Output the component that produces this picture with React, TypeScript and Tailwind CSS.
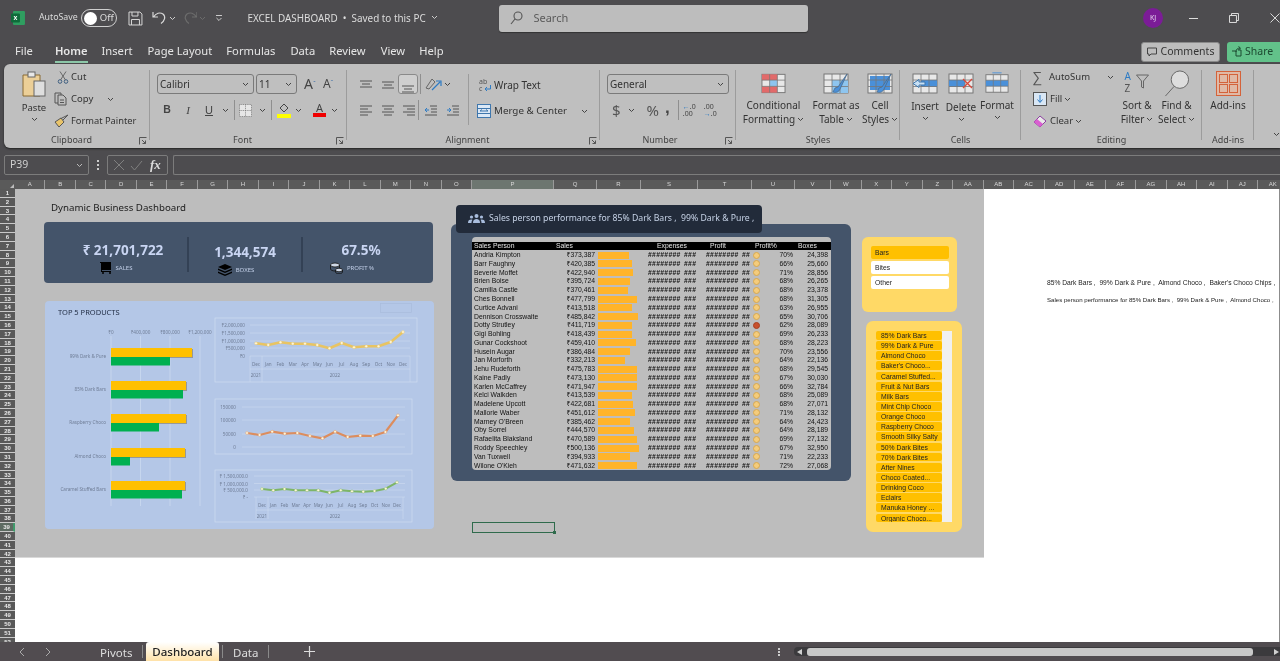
import React from "react";

const FONT = "font-['Noto_Sans','Open_Sans',sans-serif]";
const ARIAL = "font-['Liberation_Sans','Noto_Sans',sans-serif]";

const Chev = ({ className = "", color = "#444" }: { className?: string; color?: string }) => (
  <svg width="7" height="5" viewBox="0 0 7 5" className={"shrink-0 " + className}>
    <path d="M1 1l2.5 2.5L6 1" fill="none" stroke={color} strokeWidth="1" />
  </svg>
);

const Launcher = () => (
  <svg width="8" height="8" viewBox="0 0 8 8" className="absolute right-[3px] bottom-[3px]">
    <path d="M.5 7.5v-7h7M3 3l3.5 3.5M6.5 3.5v3h-3" fill="none" stroke="#555" strokeWidth="1" />
  </svg>
);

const Sep = ({ className = "h-[20px] mx-[2px]" }: { className?: string }) => <div className={"w-px bg-[#8f8f8f] shrink-0 " + className} />;

const Group = ({ w, label, launcher, labelCls = "", children }: { w: string; label: string; launcher?: boolean; labelCls?: string; children: React.ReactNode }) => (
  <div className={"relative shrink-0 flex flex-col h-full " + w}>
    <div className="flex-1 min-h-0 flex">{children}</div>
    <div className={"h-[16px] shrink-0 flex items-center justify-center text-[9px] text-[#444] " + labelCls}>{label}</div>
    {launcher && <Launcher />}
    <div className="absolute right-0 top-[6px] bottom-[8px] w-px bg-[#9c9c9c]" />
  </div>
);

const Lines = ({ rows }: { rows: number[][] }) => (
  <svg width="14" height="13" viewBox="0 0 14 13">
    {rows.map((r, i) => (
      <path key={i} d={`M${r[0]} ${r[2]}H${r[1]}`} stroke="#555" strokeWidth="1" />
    ))}
  </svg>
);

const GridIcon = ({ fill, children, w = 26 }: { fill?: React.ReactNode; children?: React.ReactNode; w?: number }) => (
  <svg width={w} height="22" viewBox="0 0 26 22">
    <rect x="1" y="2" width="24" height="19" fill="#e8e8e8" stroke="#777" />
    {fill}
    <path d="M1 8h24M1 14.500h24M9 2v19M17 2v19" stroke="#777" strokeWidth="0.8" fill="none" />
    {children}
  </svg>
);

const Brush = () => (
  <path d="M24 2L15 15l-3 1-2 4c3 1 6 0 7-3l1-2z" fill="#4a90d9" stroke="#4d6b8a" strokeWidth="0.8" />
);

const BigBtn = ({ w, icon, l1, l2, chevOwnLine, mt = "mt-[4px]" }: { w: string; icon: React.ReactNode; l1: string; l2?: string; chevOwnLine?: boolean; mt?: string }) => (
  <div className={"shrink-0 flex flex-col items-center text-[10px] leading-[14px] text-[#333] pt-[7px] " + w}>
    <div className="h-[23px] flex items-end justify-center">{icon}</div>
    <div className={"whitespace-nowrap " + mt}>{l1}</div>
    {chevOwnLine ? <Chev className="mt-[3px]" /> : (
      <div className="whitespace-nowrap flex items-center gap-[2px]">{l2}<Chev /></div>
    )}
  </div>
);

const Combo = ({ w, text }: { w: string; text: string }) => (
  <div className={"h-[20px] rounded-[3px] border border-[#7a7a7a] flex items-center justify-between pl-[2px] pr-[4px] text-[10px] text-[#333] " + w}>
    <span>{text}</span><Chev />
  </div>
);

const TitleBar = () => (
  <div className="h-[36px] flex items-center text-[#dcdcdc] shrink-0">
    <svg width="14" height="14" viewBox="0 0 14 14" className="ml-[11px]">
      <rect x="2" y="0" width="12" height="14" rx="1" fill="#2f9e60" />
      <rect x="0" y="2.500" width="9" height="9" rx="1" fill="#0f6b3a" />
      <text x="4.500" y="9.500" fontSize="7" fontWeight="700" fill="#fff" textAnchor="middle" fontFamily="Liberation Sans">x</text>
    </svg>
    <span className="ml-[14px] w-[42px] text-[8.800px] whitespace-nowrap">AutoSave</span>
    <div className="w-[36px] h-[18px] rounded-full border border-[#cfcfcf] flex items-center pl-[2px] gap-[3px]">
      <div className="w-[13px] h-[13px] rounded-full bg-white" />
      <span className="text-[9.500px] text-[#ddd]">Off</span>
    </div>
    <svg width="15" height="15" viewBox="0 0 15 15" className="ml-[11px]" fill="none" stroke="#d8d8d8">
      <path d="M1 1h11l2 2v11H1zM4 1v4h6V1M3.500 14V8.500h8V14" />
    </svg>
    <svg width="15" height="14" viewBox="0 0 15 14" className="ml-[9px]" fill="none" stroke="#d8d8d8" strokeWidth="1.200">
      <path d="M1 1v5h5M1.500 6C4 2 8 1 11 3c3 2.500 2 7-2 9.500" />
    </svg>
    <Chev className="ml-[2px]" color="#ccc" />
    <svg width="15" height="14" viewBox="0 0 15 14" className="ml-[7px]" fill="none" stroke="#6c6c6c" strokeWidth="1.200">
      <path d="M14 1v5H9M13.500 6C11 2 7 1 4 3c-3 2.500-2 7 2 9.500" />
    </svg>
    <Chev className="ml-[2px]" color="#6c6c6c" />
    <svg width="8" height="8" viewBox="0 0 8 8" className="ml-[9px]" fill="none" stroke="#ccc">
      <path d="M1 1.500h6M1.500 4l2.500 2.500L6.500 4" />
    </svg>
    <span className="ml-[24px] text-[9.900px] whitespace-pre flex items-center gap-[3px] w-[253px]">EXCEL DASHBOARD  •  Saved to this PC <Chev color="#ccc" /></span>
    <div className="w-[310px] h-[27px] rounded-[3px] bg-[#bdbdbd] flex items-center pl-[11px] gap-[10px] text-[#5b5b5b] text-[11px] shadow-[0_1px_1px_#333]">
      <svg width="13" height="14" viewBox="0 0 13 14" fill="none" stroke="#555" strokeWidth="1.100"><circle cx="8" cy="5" r="4" /><path d="M5 8l-4 5" /></svg>
      Search
    </div>
    <div className="ml-[335px] w-[20px] h-[20px] rounded-full bg-[#7b1c97] flex items-center justify-center text-[7px] text-[#e6d3ee]">KJ</div>
    <div className="ml-[26px] w-[9px] h-px bg-[#ddd]" />
    <svg width="10" height="10" viewBox="0 0 10 10" className="ml-[31px]" fill="none" stroke="#ddd"><path d="M.5 2.500h7v7h-7zM2.500 2.500v-2h7v7h-2" /></svg>
    <svg width="10" height="10" viewBox="0 0 10 10" className="ml-[31px]" stroke="#ddd"><path d="M.5.5l9 9M9.500.5l-9 9" /></svg>
  </div>
);

const menu: [string, string][] = [["File", "ml-[15px]"], ["Home", "ml-[22px]"], ["Insert", "ml-[14px]"], ["Page Layout", "ml-[15px]"], ["Formulas", "ml-[14px]"], ["Data", "ml-[15px]"], ["Review", "ml-[14px]"], ["View", "ml-[15px]"], ["Help", "ml-[14px]"]];

const MenuBar = () => (
  <div className="h-[28px] flex items-center text-[11.200px] text-[#e6e6e6] shrink-0">
    <div className="flex items-center pt-[3px]">
      {menu.map(([m, c]) => (
        <span key={m} className={"relative whitespace-nowrap " + c + (m === "Home" ? " font-semibold" : "")}>
          {m}
          {m === "Home" && <span className="absolute left-0 right-0 -bottom-[3px] h-[2px] bg-[#8cc7a8]" />}
        </span>
      ))}
    </div>
    <div className="ml-auto w-[79px] h-[20px] mt-[3px] rounded-[3px] bg-[#bdbdbd] border border-[#8a8a8a] flex items-center justify-center gap-[4px] text-[10.500px] text-[#333]">
      <svg width="10" height="10" viewBox="0 0 10 10" fill="none" stroke="#444"><path d="M.5 1h9v6H4L2 9V7H.5z" /></svg>Comments
    </div>
    <div className="ml-[7px] w-[53px] h-[20px] mt-[3px] rounded-l-[3px] bg-[#62c28a] flex items-center pl-[4px] gap-[3px] text-[10.500px] text-[#1d4a31] shrink-0">
      <svg width="11" height="11" viewBox="0 0 11 11" fill="none" stroke="#1d4a31"><path d="M1 5h4v5h5V4H7M5 6c0-3 2-4 4-4M7.500.5L9.500 2 7.500 4" /></svg>Share
    </div>
  </div>
);

const Ribbon = () => (
  <div className="h-[84px] ml-[4px] rounded-l-[6px] bg-[#bfbfbf] flex shrink-0 shadow-[0_1px_2px_#222]">
    <Group w="w-[146px]" label="Clipboard" labelCls="pr-[11px]" launcher>
      <div className="w-[50px] pl-[12px] pr-[2px] pt-[7px] flex flex-col items-center text-[9.500px] text-[#333] leading-[13px]">
        <svg width="24" height="27" viewBox="0 0 24 27" fill="none" className="shrink-0">
          <path d="M1 4h17v21H1z" fill="#eccf97" stroke="#8a6a33" />
          <rect x="6" y="1" width="7" height="5" fill="#e8e8e8" stroke="#666" />
          <rect x="12" y="10" width="11" height="15" fill="#dedede" stroke="#666" />
        </svg>
        <span className="mt-[3px]">Paste</span>
        <Chev className="mt-[3px]" />
      </div>
      <div className="flex flex-col pt-[2px] text-[9.500px] text-[#333]">
        <div className="h-[22px] shrink-0 flex items-center">
          <svg width="14" height="13" viewBox="0 0 14 13" fill="none" stroke="#3f5f80" className="ml-[2px]"><circle cx="4" cy="10.500" r="1.800" /><circle cx="10" cy="10.500" r="1.800" /><path d="M4.500 9L10 .5M9.500 9L4 .5" stroke="#666" /></svg>
          <span className="ml-[1px]">Cut</span>
        </div>
        <div className="h-[22px] shrink-0 flex items-center">
          <svg width="14" height="14" viewBox="0 0 14 14" fill="none" stroke="#555"><path d="M4 11H1V1h6v2M4 3h5l3 3v7H4z" /><path d="M6 8h4M6 10.500h4" /></svg>
          <span className="ml-[3px]">Copy</span>
          <Chev className="ml-[14px]" />
        </div>
        <div className="h-[22px] shrink-0 flex items-center">
          <svg width="15" height="14" viewBox="0 0 15 14" fill="none"><path d="M14 1L8 7 6 5z" stroke="#555" /><path d="M7 4L1 8l4 5 5-5z" fill="#e9c46a" stroke="#555" /></svg>
          <span className="ml-[2px] whitespace-nowrap text-[9.300px]">Format Painter</span>
        </div>
      </div>
    </Group>
    <Group w="w-[197px]" label="Font" labelCls="pr-[12px]" launcher>
      <div className="pl-[7px] pt-[10px] flex flex-col gap-[6px] w-full">
        <div className="flex items-center">
          <Combo w="w-[97px]" text="Calibri" />
          <Combo w="w-[41px] ml-[2px]" text="11" />
          <span className="ml-[7px] text-[14px] text-[#444] leading-none">A<sup className="text-[7px] text-[#3d6ea5]">ˆ</sup></span>
          <span className="ml-[7px] text-[12px] text-[#444] leading-none">A<sup className="text-[7px] text-[#3d6ea5]">ˇ</sup></span>
        </div>
        <div className="flex items-center h-[20px] text-[#444]">
          <span className={"w-[20px] text-center font-bold text-[10.500px] " + ARIAL}>B</span>
          <span className="w-[22px] text-center italic text-[11px] font-['Liberation_Serif']">I</span>
          <span className={"w-[20px] text-center underline text-[11px] " + ARIAL}>U</span>
          <Chev className="ml-[3px]" />
          <Sep className="h-[20px] ml-[5px]" />
          <svg width="13" height="13" viewBox="0 0 13 13" className="ml-[4px]" fill="#e6e6e6" stroke="#777" strokeWidth="0.8" strokeDasharray="1 .8"><rect x=".5" y=".5" width="12" height="12" /><path d="M.5 6.500h12M6.500.5v12" /></svg>
          <Chev className="ml-[7px]" />
          <Sep className="h-[20px] ml-[5px]" />
          <svg width="14" height="15" viewBox="0 0 14 15" className="ml-[5px]"><path d="M7 1l4 4-4 4-4-4z" fill="none" stroke="#444" /><rect y="11" width="14" height="4" fill="#ffff00" /></svg>
          <Chev className="ml-[4px]" />
          <div className="ml-[11px] flex flex-col items-center leading-none">
            <span className="text-[11px] text-[#444] h-[11px] -mt-[2px]">A</span>
            <span className="block w-[13px] h-[4px] bg-[#f00000]" />
          </div>
          <Chev className="ml-[5px]" />
        </div>
      </div>
    </Group>
    <Group w="w-[253px]" label="Alignment" labelCls="pr-[12px]" launcher>
      <div className="pl-[12px] pt-[10px] flex flex-col gap-[6px] w-[121px] shrink-0">
        <div className="flex items-center h-[20px]">
          <Lines rows={[[1, 13, 3], [3, 11, 6], [1, 13, 9]]} />
          <span className="w-[8px]" />
          <Lines rows={[[1, 13, 4], [3, 11, 7], [1, 13, 10]]} />
          <div className="ml-[3px] w-[20px] h-[20px] rounded-[3px] border border-[#8a8a8a] bg-[#cfcfcf] flex items-end justify-center"><Lines rows={[[1, 13, 6], [3, 11, 9], [1, 13, 12]]} /></div>
          <Sep className="h-[20px] ml-[2px]" />
          <svg width="17" height="15" viewBox="0 0 17 15" className="ml-[4px]" fill="none"><path d="M1 11L7 2l3 3-6 7z" stroke="#666" /><path d="M7 13L15 5M11 4h5v5" stroke="#2d7bc4" strokeWidth="1.200" /></svg>
          <Chev className="ml-[2px]" />
        </div>
        <div className="flex items-center h-[20px]">
          <Lines rows={[[1, 13, 2], [1, 9, 5], [1, 13, 8], [1, 9, 11]]} />
          <span className="w-[8px]" />
          <Lines rows={[[1, 13, 2], [3, 11, 5], [1, 13, 8], [3, 11, 11]]} />
          <span className="w-[7px]" />
          <Lines rows={[[1, 13, 2], [5, 13, 5], [1, 13, 8], [5, 13, 11]]} />
          <Sep className="h-[20px] ml-[2px]" />
          <svg width="13" height="13" viewBox="0 0 13 13" className="ml-[5px]" fill="none" stroke="#555"><path d="M6 2h7M7 5h6M7 8h6M1 11h12" /><path d="M5 6H1M3 4L1 6l2 2" stroke="#2d7bc4" /></svg>
          <svg width="13" height="13" viewBox="0 0 13 13" className="ml-[9px]" fill="none" stroke="#555"><path d="M6 2h7M7 5h6M7 8h6M1 11h12" /><path d="M1 6h4M3 4l2 2-2 2" stroke="#2d7bc4" /></svg>
        </div>
      </div>
      <div className="w-px h-[51px] mt-[10px] bg-[#9c9c9c]" />
      <div className="pl-[10px] pt-[11px] flex flex-col gap-[6px] text-[10px] text-[#333]">
        <div className="h-[20px] flex items-center">
          <svg width="13" height="15" viewBox="0 0 13 15" fill="none" className="shrink-0">
            <text x="0" y="6" fontSize="7" fill="#555" fontFamily="Noto Sans">ab</text>
            <text x="0" y="13" fontSize="7" fill="#555" fontFamily="Noto Sans">c</text>
            <path d="M11.500 7v4H6M8 9l-2 2 2 2" stroke="#2d7bc4" />
          </svg>
          <span className="ml-[2px]">Wrap Text</span>
        </div>
        <div className="h-[20px] flex items-center">
          <svg width="14" height="14" viewBox="0 0 14 14" className="-ml-[2px]" fill="#dbe8f6" stroke="#3f77ad"><rect x=".5" y=".5" width="13" height="13" /><path d="M.5 4.500h13M.5 9.500h13M3 7h8M3 7l2-1.500M11 7L9 5.500" /></svg>
          <span className="ml-[3px] whitespace-nowrap text-[9.800px]">Merge &amp; Center</span>
          <Chev className="ml-[14px]" />
        </div>
      </div>
    </Group>
    <Group w="w-[136px]" label="Number" labelCls="pr-[16px]" launcher>
      <div className="pl-[7px] pt-[10px] flex flex-col gap-[6px]">
        <Combo w="w-[122px]" text="General" />
        <div className="h-[20px] flex items-center text-[#444]">
          <span className="ml-[5px] text-[15px] text-[#555]">$</span>
          <Chev className="ml-[7px]" />
          <span className="ml-[12px] text-[15px] text-[#555]">%</span>
          <span className={"ml-[6px] text-[17px] font-bold leading-none -mt-[6px] " + ARIAL}>,</span>
          <Sep className="h-[20px] ml-[8px]" />
          <span className="ml-[4px] text-[7px] leading-[7px] text-[#444] w-[15px] shrink-0"><span className="text-[#2d7bc4]">←</span>.0<br />.00</span>
          <span className="ml-[6px] text-[7px] leading-[7px] text-[#444] w-[15px] shrink-0">.00<br /><span className="text-[#2d7bc4]">→</span>.0</span>
        </div>
      </div>
    </Group>
    <Group w="w-[164px]" label="Styles">
      <BigBtn w="w-[75px]" l1="Conditional" l2="Formatting" icon={
        <GridIcon w={25} fill={<><rect x="1" y="2" width="16" height="6" fill="#e26a6a" /><rect x="9" y="8" width="8" height="6.500" fill="#8ec5ef" /><rect x="1" y="14.500" width="16" height="6.500" fill="#e26a6a" /></>} />
      } />
      <BigBtn w="w-[50px]" l1="Format as" l2="Table" icon={
        <GridIcon fill={<rect x="9" y="8" width="16" height="13" fill="#8ec5ef" />}><Brush /></GridIcon>
      } />
      <BigBtn w="w-[38px]" l1="Cell" l2="Styles" icon={
        <GridIcon fill={<rect x="3" y="4" width="20" height="14" fill="#4a90d9" />}><Brush /></GridIcon>
      } />
    </Group>
    <Group w="w-[121px]" label="Cells">
      <div className="w-[7px]" />
      <BigBtn w="w-[36px]" chevOwnLine l1="Insert" mt="mt-[5px]" icon={
        <GridIcon fill={<rect x="9" y="8" width="16" height="7" fill="#4a90d9" />}><path d="M1 11.500l6-4v2.500h6v3H7v2.500z" fill="#c9e1f5" stroke="#3f77ad" /></GridIcon>
      } />
      <BigBtn w="w-[36px]" chevOwnLine l1="Delete" mt="mt-[6px]" icon={
        <GridIcon fill={<rect x="1" y="8" width="16" height="7" fill="#4a90d9" />}><path d="M15 7l9 9M24 7l-9 9" stroke="#d9483b" strokeWidth="1.300" /></GridIcon>
      } />
      <BigBtn w="w-[36px]" chevOwnLine l1="Format" mt="mt-[4px]" icon={
        <GridIcon w={24} fill={<><path d="M8 0h10" stroke="#4a90d9" /><rect x="1" y="8" width="24" height="6.500" fill="#4a90d9" /></>} />
      } />
    </Group>
    <Group w="w-[181px]" label="Editing">
      <div className="pl-[12px] pt-[2px] flex flex-col text-[9.500px] text-[#333] w-[96px] shrink-0">
        <div className="h-[22px] shrink-0 flex items-center">
          <span className="w-[14px] text-[14px] text-[#555] leading-none">∑</span>
          <span className="ml-[2px] whitespace-nowrap">AutoSum</span>
          <Chev className="ml-[17px]" />
        </div>
        <div className="h-[22px] shrink-0 flex items-center">
          <svg width="14" height="14" viewBox="0 0 14 14" fill="#d9e7f5" stroke="#555"><rect x=".5" y=".5" width="13" height="13" /><path d="M7 3v7M4.500 7.500L7 10.500l2.500-3" stroke="#2d7bc4" fill="none" /></svg>
          <span className="ml-[3px]">Fill</span><Chev className="ml-[2px]" />
        </div>
        <div className="h-[22px] shrink-0 flex items-center">
          <svg width="14" height="13" viewBox="0 0 14 13"><path d="M1 7l6-6 6 5-6 6z" fill="#e9e9e9" stroke="#8c3fa0" /><path d="M1 7l3-3 6 5-3 3z" fill="#d95fd0" /></svg>
          <span className="ml-[3px]">Clear</span><Chev className="ml-[2px]" />
        </div>
      </div>
      <div className="flex text-[10px] leading-[14px] text-[#333] pt-[6px]">
        <div className="w-[40px] flex flex-col items-center">
          <div className="h-[28px] flex items-start">
            <div className="w-[10px] flex flex-col text-[10px] leading-[12px]">
              <span className="text-[#2d7bc4]">A</span>
              <span className="text-[#555]">Z</span>
            </div>
            <svg width="15" height="20" viewBox="0 0 14 20" fill="none" stroke="#666"><path d="M1 5h12L8 11v7l-2-1v-6z" /></svg>
          </div>
          <span>Sort &amp;</span>
          <span className="flex items-center gap-[2px]">Filter<Chev /></span>
        </div>
        <div className="w-[39px] flex flex-col items-center">
          <svg width="27" height="28" viewBox="0 0 27 29" fill="none" stroke="#666" className="shrink-0"><circle cx="17" cy="10" r="9" fill="#ddd" /><path d="M11 17L2 27" /></svg>
          <span>Find &amp;</span>
          <span className="flex items-center gap-[2px]">Select<Chev /></span>
        </div>
      </div>
    </Group>
    <Group w="w-[52px]" label="Add-ins">
      <div className="w-full flex flex-col items-center pt-[7px] text-[10px] text-[#333]">
        <svg width="25" height="25" viewBox="0 0 25 25" fill="#e0b9a6" stroke="#d4623a" className="shrink-0"><rect x=".5" y=".5" width="24" height="24" /><rect x="3.500" y="3.500" width="8" height="8" fill="none" /><rect x="13.500" y="3.500" width="8" height="8" fill="none" /><rect x="3.500" y="13.500" width="8" height="8" fill="none" /><rect x="13.500" y="13.500" width="8" height="8" fill="none" /></svg>
        <span className="mt-[2px] whitespace-nowrap">Add-ins</span>
      </div>
    </Group>
    <div className="flex-1 flex items-end justify-end pb-[11px]"><Chev /></div>
  </div>
);

const FormulaBar = () => (
  <div className="h-[20px] mt-[7px] flex items-stretch shrink-0 text-[#cfcfcf]">
    <div className="ml-[4px] w-[85px] border border-[#7c7c7c] rounded-[2px] flex items-center justify-between pl-[5px] pr-[5px] text-[10.500px]">P39<Chev color="#bbb" /></div>
    <div className="w-[18px] flex flex-col items-center justify-center gap-[2px]"><span className="w-[2px] h-[2px] bg-[#ccc]" /><span className="w-[2px] h-[2px] bg-[#ccc]" /><span className="w-[2px] h-[2px] bg-[#ccc]" /></div>
    <div className="w-[61px] border border-[#7c7c7c] rounded-[2px] flex items-center">
      <svg width="12" height="12" viewBox="0 0 12 12" className="ml-[5px]" stroke="#808080"><path d="M1 1l10 10M11 1L1 11" /></svg>
      <svg width="13" height="11" viewBox="0 0 13 11" className="ml-[5px]" fill="none" stroke="#808080"><path d="M1 6l3.500 4L12 1" /></svg>
      <span className="ml-[7px] text-[13px] italic font-bold font-['Liberation_Serif'] text-[#ddd]">fx</span>
    </div>
    <div className="ml-[5px] flex-1 border border-r-0 border-[#7c7c7c] rounded-l-[2px]" />
  </div>
);

const cols = ["A","B","C","D","E","F","G","H","I","J","K","L","M","N","O","P","Q","R","S","T","U","V","W","X","Y","Z","AA","AB","AC","AD","AE","AF","AG","AH","AI","AJ","AK"];

const ColHeader = () => (
  <div className={"h-[9px] mt-[5px] flex bg-[#5a5a5a] shrink-0 overflow-hidden text-[6px] leading-[9px] text-[#d8d8d8] " + ARIAL}>
    <div className="w-[15px] shrink-0 relative"><span className="absolute right-[1px] bottom-[1px] w-0 h-0 border-l-[4px] border-l-transparent border-b-[4px] border-b-[#bbb]" /></div>
    <div className="grid grid-cols-[repeat(15,30.47px)_82px_43px_44px_57px_54px_43px_36px_repeat(15,30.5px)] flex-1">
      {cols.map(c => (
        <div key={c} className={"text-center border-r border-[#9a9a9a] " + (c === "P" ? "bg-[#6d7670] border-b border-b-[#5fae85]" : "")}>{c}</div>
      ))}
    </div>
  </div>
);

const RowHeader = () => (
  <div className={"w-[15px] shrink-0 bg-[#bdbdbd] overflow-hidden flex flex-col text-[6px] font-bold leading-[8px] text-[#e8e8e8] " + ARIAL}>
    {Array.from({ length: 52 }, (_, i) => (
      <div key={i} className={"h-[8.8px] shrink-0 text-center border-b border-[#c9c9c9] " + (i === 38 ? "bg-[#5d6b62] border-r-2 border-r-[#3f9a6b]" : "bg-[#595959]")}>{i + 1}</div>
    ))}
  </div>
);

const months = ["Dec", "Jan", "Feb", "Mar", "Apr", "May", "Jun", "Jul", "Aug", "Sep", "Oct", "Nov", "Dec"];

const Line = ({ xs, xe, ys, color, sw = 2 }: { xs: number; xe: number; ys: number[]; color: string; sw?: number }) => {
  const pts = ys.map((y, i) => [xs + ((xe - xs) * i) / 12, y]);
  return (
    <g>
      <polyline points={pts.map(p => p.join(",")).join(" ")} fill="none" stroke={color} strokeWidth={sw} strokeLinejoin="round" />
      {pts.map((p, i) => <circle key={i} cx={p[0]} cy={p[1]} r="1.400" fill="#fff6d8" stroke={color} strokeWidth="0.400" />)}
    </g>
  );
};

const barRows = [
  { n: "99% Dark & Pure", y: 348, a: 192, b: 170 },
  { n: "85% Dark Bars", y: 381, a: 186, b: 183 },
  { n: "Raspberry Choco", y: 414, a: 186, b: 159 },
  { n: "Almond Choco", y: 448, a: 185, b: 130 },
  { n: "Caramel Stuffed Bars", y: 481, a: 185, b: 182 },
];

const T = ({ x, y, a = "middle", c, s = 4.600 }: { x: number; y: number; a?: "middle" | "end" | "start"; c: string; s?: number }) => (
  <text x={x} y={y} fontSize={s} textAnchor={a} fill="#6f7d96" fontFamily="Noto Sans">{c}</text>
);

const Charts = () => (
  <svg width="389" height="228" viewBox="45 301 389 228" className="absolute inset-0">
    <rect x="380.500" y="303.500" width="31" height="9" fill="none" stroke="#a9bcdc" strokeWidth="0.700" />
    {[111, 140.500, 170, 200].map(x => <path key={x} d={`M${x} 336V506`} stroke="#cfdcf0" strokeWidth="0.700" />)}
    <T x={111} y={334} c="₹0" />
    <T x={140.500} y={334} c="₹400,000" />
    <T x={170} y={334} c="₹800,000" />
    <T x={200} y={334} c="₹1,200,000" />
    {barRows.map(r => (
      <g key={r.n}>
        <rect x="111.500" y={r.y + 1} width={r.a - 110.500} height="9" fill="#8f8c86" opacity="0.800" />
        <rect x="111" y={r.y} width={r.a - 111} height="9" fill="#ffc000" />
        <rect x="111" y={r.y + 9} width={r.b - 111} height="8.500" fill="#00b050" />
        <T x={106} y={r.y + 9.500} a="end" c={r.n} />
      </g>
    ))}

    <rect x="215" y="318" width="202" height="64" fill="none" stroke="#cfdcf0" strokeWidth="0.700" />
    {[325, 333, 341, 348, 356].map(y => <path key={y} d={`M250 ${y}H410`} stroke="#cfdcf0" strokeWidth="0.600" />)}
    {["₹2,000,000", "₹1,500,000", "₹1,000,000", "₹500,000", "₹0"].map((l, i) => <T key={l} x={245} y={[327, 335, 343, 350, 358][i]} a="end" c={l} />)}
    <Line xs={256} xe={403} ys={[343.300, 345, 342.300, 343.700, 343.700, 345, 348.300, 343, 347.300, 346.300, 346.300, 342, 332]} color="#e8c463" sw={2.600} />
    <path d="M250 356V382M262 356V382M410 356V382M250 369H410" stroke="#cfdcf0" strokeWidth="0.600" fill="none" />
    {months.map((m, i) => <T key={i} x={256 + 12.250 * i} y={366} c={m} />)}
    <T x={256} y={377} c="2021" />
    <T x={335} y={377} c="2022" />

    <rect x="215" y="399" width="197" height="55" fill="none" stroke="#cfdcf0" strokeWidth="0.700" />
    {[407, 420, 434, 447].map(y => <path key={y} d={`M242 ${y}H405`} stroke="#cfdcf0" strokeWidth="0.600" />)}
    {["150000", "100000", "50000", "0"].map((l, i) => <T key={l} x={236} y={[409, 422, 436, 449][i]} a="end" c={l} />)}
    <Line xs={247} xe={398} ys={[433, 435, 431.700, 433.700, 433, 436, 438.300, 431.700, 437, 435.700, 436, 432, 415.300]} color="#dc8d5e" sw={2.200} />

    <rect x="215" y="470" width="197" height="52" fill="none" stroke="#cfdcf0" strokeWidth="0.700" />
    {[476, 483.500, 490, 497].map(y => <path key={y} d={`M254 ${y}H405`} stroke="#cfdcf0" strokeWidth="0.600" />)}
    {["₹ 1,500,000.0", "₹ 1,000,000.0", "₹ 500,000.0", "₹ -"].map((l, i) => <T key={l} x={248} y={[478, 485.500, 492, 499][i]} a="end" c={l} />)}
    <Line xs={262} xe={397} ys={[489, 490.300, 489, 490.300, 490.300, 490.300, 492.700, 490.300, 491.300, 491.700, 491, 488.700, 482.300]} color="#7db567" sw={2} />
    <path d="M256 497V519M268 497V519M403 497V519M256 510H403" stroke="#cfdcf0" strokeWidth="0.600" fill="none" />
    {months.map((m, i) => <T key={i} x={262 + 11.250 * i} y={507} c={m} />)}
    <T x={262} y={518} c="2021" />
    <T x={335} y={518} c="2022" />
  </svg>
);

const Kpi = ({ cls, value, label, vcls, lcls, icon }: { cls: string; value: string; label: string; vcls: string; lcls: string; icon: React.ReactNode }) => (
  <div className={"flex flex-col items-center pt-[20px] " + cls}>
    <div className={"font-bold text-[#c9d5f2] leading-[16px] whitespace-nowrap text-[13.500px] " + vcls}>{value}</div>
    <div className={"mt-[4px] flex items-center gap-[4px] text-[6px] text-[#c2cfe8] h-[12px] " + lcls}>{icon}{label}</div>
  </div>
);

const KpiCard = () => (
  <div className={"absolute left-[29px] top-[33px] w-[389px] h-[61px] rounded-[4px] bg-[#44546a] flex " + FONT}>
    <Kpi cls="w-[144px] pl-[14px]" value="₹ 21,701,722" vcls="" lcls="-ml-[14px]" label="SALES" icon={
      <svg width="12" height="12" viewBox="0 0 12 12"><path d="M0 0h11v8H2v1h9v1H1V1H0z" /><circle cx="3" cy="11" r="1" /><circle cx="10" cy="11" r="1" /></svg>
    } />
    <div className="w-[2px] h-[35px] mt-[15px] bg-[#334155] -ml-[1px]" />
    <Kpi cls="w-[112px]" value="1,344,574" vcls="mt-[2px]" lcls="-ml-[18px] -mt-[1px]" label="BOXES" icon={
      <svg width="14" height="12" viewBox="0 0 14 12"><path d="M7 0l7 3-7 3-7-3z" /><path d="M0 4.500l7 3 7-3v1.500l-7 3-7-3zM0 7.500l7 3 7-3V9l-7 3-7-3z" /></svg>
    } />
    <div className="w-[2px] h-[35px] mt-[15px] bg-[#334155]" />
    <Kpi cls="w-[130px] pr-[14px]" value="67.5%" vcls="" lcls="-ml-[18px] -mt-[2px]" label="PROFIT %" icon={
      <svg width="13" height="12" viewBox="0 0 13 12" fill="#cfd8e6" stroke="#111" strokeWidth="0.800"><ellipse cx="5" cy="3" rx="4.500" ry="2" /><path d="M.5 3v4c0 1 2 2 4.500 2M9.500 3v3" fill="none" /><ellipse cx="9" cy="8" rx="3.500" ry="1.800" /><path d="M5.500 8v2c0 1 1.500 1.800 3.500 1.800s3.500-.8 3.500-1.800V8" fill="none" /></svg>
    } />
  </div>
);

const people: [string, number, string, string, boolean?][] = [
  ["Andria Kimpton", 373387, "70%", "24,398"], ["Barr Faughny", 420385, "66%", "25,660"], ["Beverie Moffet", 422940, "71%", "28,856"],
  ["Brien Boise", 395724, "68%", "26,265"], ["Camilla Castle", 370461, "68%", "23,378"], ["Ches Bonnell", 477799, "68%", "31,305"],
  ["Curtice Advani", 413518, "63%", "26,955"], ["Dennison Crosswaite", 485842, "65%", "30,706"], ["Dotty Strutley", 411719, "62%", "28,089", true],
  ["Gigi Bohling", 418439, "69%", "26,233"], ["Gunar Cockshoot", 459410, "68%", "28,223"], ["Husein Augar", 386484, "70%", "23,556"],
  ["Jan Morforth", 332213, "64%", "22,136"], ["Jehu Rudeforth", 475783, "68%", "29,545"], ["Kaine Padly", 473130, "67%", "30,030"],
  ["Karlen McCaffrey", 471947, "66%", "32,784"], ["Kelci Walkden", 413539, "68%", "25,089"], ["Madelene Upcott", 422681, "68%", "27,071"],
  ["Mallorie Waber", 451612, "71%", "28,132"], ["Marney O'Breen", 385462, "64%", "24,423"], ["Oby Sorrel", 444570, "64%", "28,189"],
  ["Rafaelita Blaksland", 470589, "69%", "27,132"], ["Roddy Speechley", 500136, "67%", "32,950"], ["Van Tuxwell", 394933, "71%", "22,233"],
  ["Wilone O'Kieh", 471632, "72%", "27,068"],
];

const GRID = "grid grid-cols-[82px_39px_53px_36px_22px_36px_11px_8px_32px_35px]";
const HASH = "font-bold text-[6.800px] tracking-[0.3px]";

const SalesTable = () => (
  <>
    <div className="absolute left-[436px] top-[35px] w-[400px] h-[257px] rounded-[6px] bg-[#44546a]">
      <div className={"absolute left-[21px] top-[13px] w-[359px] h-[233px] rounded-[4px] bg-[#bdbdbd] pt-[5px] overflow-hidden text-[6.800px] text-[#111] " + ARIAL}>
        <div className={GRID + " h-[8px] mb-[0.800px] bg-black text-[#e6e6e6] leading-[8px] pl-[2px]"}>
          <span>Sales Person</span><span>Sales</span><span />
          <span className="col-span-2 pl-[9px]">Expenses</span>
          <span className="col-span-2 pl-[4px]">Profit</span>
          <span className="col-span-2 pl-[2px]">Profit%</span>
          <span className="pl-[5px]">Boxes</span>
        </div>
        {people.map(([n, s, p, b, red]) => (
          <div key={n} className={GRID + " h-[8.780px] items-center leading-[8px] pl-[2px]"}>
            <span className="whitespace-nowrap">{n}</span>
            <span className="text-right">₹{s.toLocaleString("en-US")}</span>
            <span className="pl-[3px]"><span className="block h-[7px] bg-[#ffb429]" style={{ width: (s / 500136) * 41 }} /></span>
            <span className={HASH}>########</span>
            <span className={HASH}>###</span>
            <span className={HASH}>########</span>
            <span className={HASH}>##</span>
            <span className={"w-[7px] h-[7px] rounded-full " + (red ? "bg-[#c8502d] border border-[#a84020]" : "bg-[#f4cc7c] border border-[#d8a84f]")} />
            <span className="text-right">{p}</span>
            <span className="text-right">{b}</span>
          </div>
        ))}
      </div>
    </div>
    <div className={"absolute left-[441px] top-[16px] w-[306px] h-[28px] rounded-[4px] bg-[#222b3a] flex items-center pl-[12px] gap-[4px] text-[8.700px] text-[#c6d2e6] whitespace-pre " + FONT}>
      <svg width="17" height="10" viewBox="0 0 17 10" fill="#a9bddd"><circle cx="8.500" cy="2" r="2" /><path d="M5 9c0-3 1.500-4 3.500-4S12 6 12 9z" /><circle cx="3.500" cy="3" r="1.600" /><path d="M0 9c0-2.500 1-3.500 3.500-3.500 1 0 1 .5.500 1-.5 1-.5 2-.5 2.500z" /><circle cx="13.500" cy="3" r="1.600" /><path d="M17 9c0-2.500-1-3.500-3.500-3.500-1 0-1 .5-.5 1 .5 1 .5 2 .5 2.500z" /></svg>
      Sales person performance for 85% Dark Bars ,  99% Dark &amp; Pure ,
    </div>
  </>
);

const cats = ["Bars", "Bites", "Other"];
const prods = ["85% Dark Bars", "99% Dark & Pure", "Almond Choco", "Baker's Choco...", "Caramel Stuffed...", "Fruit & Nut Bars", "Milk Bars", "Mint Chip Choco", "Orange Choco", "Raspberry Choco", "Smooth Silky Salty", "50% Dark Bites", "70% Dark Bites", "After Nines", "Choco Coated...", "Drinking Coco", "Eclairs", "Manuka Honey ...", "Organic Choco..."];

const Slicers = () => (
  <div className={"text-[6.800px] text-[#222] " + ARIAL}>
    <div className="absolute left-[847px] top-[48px] w-[95px] h-[75px] rounded-[6px] bg-[#ffd966] pt-[9px] pl-[9px] flex flex-col gap-[2px]">
      {cats.map((c, i) => (
        <div key={c} className={"w-[78px] h-[13px] rounded-[2px] pl-[4px] leading-[13px] " + (i === 0 ? "bg-[#ffc000]" : "bg-white")}>{c}</div>
      ))}
    </div>
    <div className="absolute left-[851px] top-[132px] w-[96px] h-[211px] rounded-[7px] bg-[#ffd966] pt-[10px] pl-[10px] flex">
      <div className="w-[66px] flex flex-col">
        {prods.map(p => (
          <div key={p} className="h-[8.800px] mb-[1.350px] shrink-0 rounded-[2px] bg-[#ffc000] pl-[5px] leading-[9px] whitespace-nowrap overflow-hidden">{p}</div>
        ))}
      </div>
      <div className="w-[10px] h-[191px] bg-[#f0f0f0]" />
    </div>
  </div>
);

const Sheet = () => (
  <div className="relative flex-1 bg-white overflow-hidden">
    <div className="w-[969px] h-[369px] bg-[#bdbdbd] border-b border-[#d9d9d9]" />
    <div className={"absolute left-[36px] top-[12px] text-[9.700px] leading-[14px] text-[#1c1c1c] " + FONT}>Dynamic Business Dashboard</div>
    <KpiCard />
    <div className={"absolute left-[30px] top-[112px] w-[389px] h-[228px] rounded-[4px] bg-[#b4c7e7] " + FONT}>
      <Charts />
      <div className="absolute left-[13px] top-[6px] text-[7.500px] text-[#1f2b42]">TOP 5 PRODUCTS</div>
    </div>
    <SalesTable />
    <Slicers />
    <div className="absolute left-[457px] top-[333px] w-[83px] h-[11px] border-[1.500px] border-[#2f6b4c]">
      <span className="absolute -right-[2px] -bottom-[2px] w-[3px] h-[3px] bg-[#2f6b4c]" />
    </div>
    <div className={"absolute left-[1032px] top-[89px] w-[231px] overflow-hidden whitespace-pre text-[6.700px] text-[#222] " + ARIAL}>85% Dark Bars ,  99% Dark &amp; Pure ,  Almond Choco ,  Baker's Choco Chips ,</div>
    <div className={"absolute left-[1032px] top-[106px] w-[231px] overflow-hidden whitespace-pre text-[6.100px] text-[#222] " + ARIAL}>Sales person performance for 85% Dark Bars ,  99% Dark &amp; Pure ,  Almond Choco ,</div>
    <div className="absolute right-0 top-0 bottom-0 w-px bg-[#8c8c8c]" />
  </div>
);

const SheetTabs = () => (
  <div className={"h-[19px] bg-[#514c50] flex items-center shrink-0 text-[11.500px] text-[#dedede] " + FONT}>
    <svg width="7" height="10" viewBox="0 0 7 10" className="ml-[18px]" fill="none" stroke="#aaa"><path d="M6 1L2 5l4 4" /></svg>
    <svg width="7" height="10" viewBox="0 0 7 10" className="ml-[20px]" fill="none" stroke="#aaa"><path d="M1 1l4 4-4 4" /></svg>
    <span className="ml-[48px] w-[42px] pt-[3px] leading-none">Pivots</span>
    <div className="w-px h-[13px] bg-[#8a8a8a]" />
    <div className="ml-[3px] w-[73px] h-full rounded-t-[3px] bg-gradient-to-b from-[#ffffff] to-[#ffe2a8] text-[#222] font-medium flex items-center justify-center">Dashboard</div>
    <div className="ml-[3px] w-px h-[13px] bg-[#8a8a8a]" />
    <span className="ml-[10px] w-[35px] pt-[3px] leading-none">Data</span>
    <div className="w-px h-[13px] bg-[#8a8a8a]" />
    <svg width="11" height="11" viewBox="0 0 11 11" className="ml-[35px]" stroke="#ddd" strokeWidth="1.200"><path d="M5.500 0v11M0 5.500h11" /></svg>
    <div className="ml-[463px] flex flex-col gap-[1px] w-[2px]"><span className="h-[2px] bg-[#ccc]" /><span className="h-[2px] bg-[#ccc]" /><span className="h-[2px] bg-[#ccc]" /></div>
    <div className="ml-[14px] flex-1 h-[9px] rounded-l-[4px] bg-[#3b3a3d] flex items-center">
      <span className="ml-[3px] w-0 h-0 border-y-[3.500px] border-y-transparent border-r-[5px] border-r-[#d0d0d0]" />
      <div className="ml-[5px] w-[446px] h-[8px] rounded-[3px] bg-[#c8c8c8]" />
      <span className="ml-auto mr-[1px] w-0 h-0 border-y-[3.500px] border-y-transparent border-l-[5px] border-l-[#d0d0d0]" />
    </div>
  </div>
);

export default function App() {
  return (
    <div className={"w-[1280px] h-[661px] overflow-hidden flex flex-col bg-[#4d4c4f] blur-[0.3px] " + FONT}>
      <TitleBar />
      <MenuBar />
      <Ribbon />
      <FormulaBar />
      <ColHeader />
      <div className="flex-1 min-h-0 flex overflow-hidden">
        <RowHeader />
        <Sheet />
      </div>
      <SheetTabs />
    </div>
  );
}
